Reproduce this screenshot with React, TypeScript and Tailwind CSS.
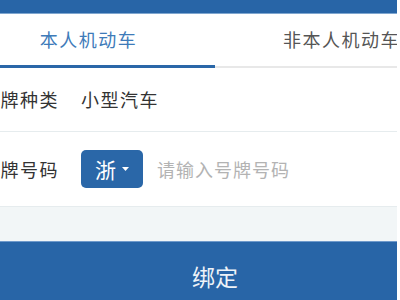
import React from "react";

export default function App() {
  const font = { fontFamily: '"Noto Sans CJK SC", "Noto Sans", sans-serif' };
  return (
    <div className="w-[400px] h-[300px] overflow-hidden bg-white" style={font}>
      <div className="w-[397px] h-[300px] overflow-hidden">
        <div className="ml-[-38px] w-[506px] flex flex-col">
          <div className="h-[14px] bg-[#2865a7] border-b border-[#7fa6cf]" />
          <div className="flex h-[54px] bg-white">
            <div className="flex-1 flex flex-col">
              <div className="flex-1 flex items-center justify-center text-[18px] text-[#3e7bb9] tracking-[1.5px]">
                本人机动车
              </div>
              <div className="h-[3px] bg-[#2a67a8]" />
            </div>
            <div className="flex-1 flex flex-col">
              <div className="flex-1 flex items-center justify-center text-[18px] text-[#555] tracking-[1.5px]">
                非本人机动车
              </div>
              <div className="h-[3px] flex flex-col justify-end">
                <div className="h-[2px] bg-[#e8e8e8]" />
              </div>
            </div>
          </div>
          <div className="h-[64px] flex items-center pl-[19px] text-[18px] text-[#333] border-b border-[#e6ecee] tracking-[1.5px]">
            <span className="w-[100px]">号牌种类</span>
            <span>小型汽车</span>
          </div>
          <div className="h-[75px] flex items-center pl-[19px] text-[18px] border-b border-[#e6ecee]">
            <span className="w-[100px] text-[#333] tracking-[1.5px]">号牌号码</span>
            <div className="w-[62px] h-[38px] rounded-[5px] bg-[#2a67a8] flex items-center justify-center gap-[6px] text-white">
              <span className="text-[21px] leading-none">浙</span>
              <svg width="7" height="5" viewBox="0 0 7 5">
                <path d="M0 0 L7 0 L3.5 4 Z" fill="#ffffff" />
              </svg>
            </div>
            <span className="ml-[14px] text-[18px] text-[#b3b3b3] tracking-[1px]">请输入号牌号码</span>
          </div>
          <div className="h-[34px] bg-[#f2f6f7]" />
          <div className="h-[70px] bg-[#2865a7] flex items-center justify-center text-[23px] text-[#eef3f8] border-t border-[#6f9acb]">
            <span>绑定</span>
          </div>
        </div>
      </div>
    </div>
  );
}
